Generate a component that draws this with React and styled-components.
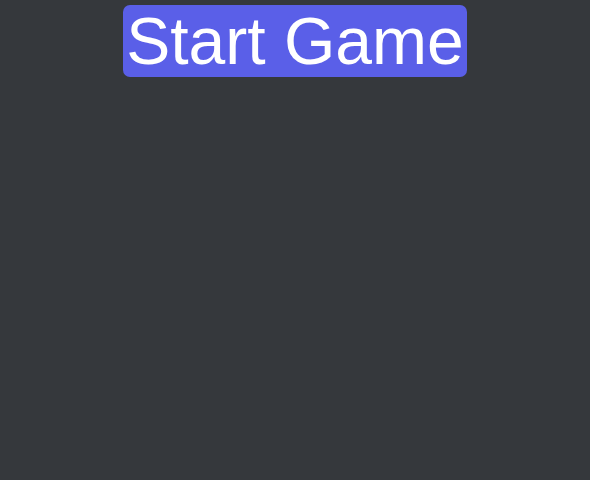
import React from 'react';
import styled, { createGlobalStyle } from 'styled-components';

const GlobalStyle = createGlobalStyle`
  html, body {
    margin: 0;
    padding: 0;
    height: 100%;
    background-color: #35383c;
  }
  #root {
    min-height: 100%;
  }
`;

const Page = styled.div`
  display: flex;
  flex-direction: column;
  align-items: center;
  padding-top: 5px;
  min-height: 480px;
  box-sizing: border-box;
`;

const StartButton = styled.button`
  font-family: "Liberation Sans", Arial, sans-serif;
  font-size: 66px;
  line-height: 72px;
  height: 72px;
  padding: 0 3px;
  color: #ffffff;
  background-color: #5a5fe8;
  border: none;
  border-radius: 7px;
  cursor: pointer;
`;

const App = () => {
  return (
    <Page>
      <GlobalStyle />
      <StartButton>Start Game</StartButton>
    </Page>
  );
};

export default App;
